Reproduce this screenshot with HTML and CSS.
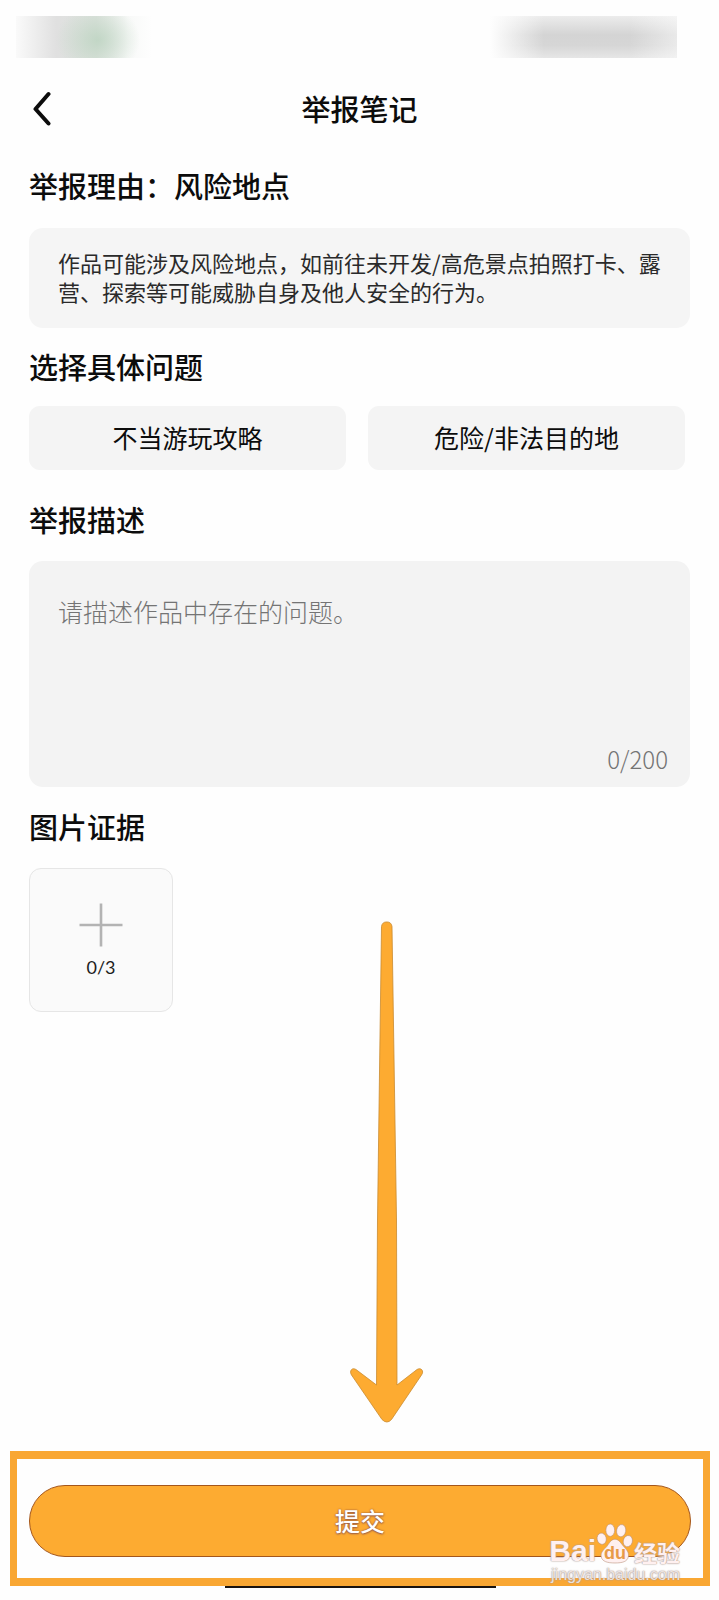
FILE: index.html
```html
<!DOCTYPE html>
<html lang="zh-CN">
<head>
<meta charset="utf-8">
<meta name="viewport" content="width=device-width, initial-scale=1">
<title>举报笔记</title>
<link rel="stylesheet" href="styles.css">
</head>
<body>
<div class="page">
  <div class="status" aria-hidden="true">
    <div class="status-left"></div>
    <div class="status-right"></div>
  </div>
  <header class="header">
    <button class="back" type="button" aria-label="返回">
      <svg width="20" height="36" viewBox="0 0 20 36"><path d="M16.500 4 3.500 19 16.500 33.500" fill="none" stroke="#0c0c0c" stroke-width="4" stroke-linecap="round" stroke-linejoin="round"/></svg>
    </button>
    <h1 class="title">举报笔记</h1>
  </header>
  <main class="content">
    <h2 class="heading">举报理由：风险地点</h2>
    <p class="notice">作品可能涉及风险地点，如前往未开发/高危景点拍照打卡、露营、探索等可能威胁自身及他人安全的行为。</p>
    <h2 class="heading">选择具体问题</h2>
    <div class="options">
      <button class="option" type="button">不当游玩攻略</button>
      <button class="option" type="button">危险/非法目的地</button>
    </div>
    <h2 class="heading"><label for="desc">举报描述</label></h2>
    <div class="desc">
      <textarea class="desc-input" id="desc" maxlength="200" placeholder="请描述作品中存在的问题。"></textarea>
      <span class="desc-count">0/200</span>
    </div>
    <h2 class="heading">图片证据</h2>
    <button class="upload" type="button" aria-label="添加图片 0/3">
      <svg width="44" height="44" viewBox="0 0 44 44"><path d="M22 .5v43M.5 22h43" stroke="#b3b3b3" stroke-width="2.600"/></svg>
      <span class="upload-count">0/3</span>
    </button>
  </main>
  <footer class="footer">
    <div class="frame">
      <button class="submit" type="button">提交</button>
    </div>
    <div class="home-bar"></div>
    <div class="watermark">
      <div class="wm-row">
        <span class="wm-bai">Bai</span>
        <span class="wm-paw">
          <svg width="38" height="43" viewBox="0 0 40 44" fill="#fff0f0" stroke="#b98c74" stroke-width=".6">
            <ellipse cx="6" cy="17" rx="4.800" ry="6" transform="rotate(-12 6 17)"/>
            <ellipse cx="15" cy="8" rx="4.600" ry="6.500"/>
            <ellipse cx="26.500" cy="8.500" rx="4.800" ry="6.500" transform="rotate(10 26.500 8.500)"/>
            <ellipse cx="33.500" cy="19.500" rx="4.800" ry="6" transform="rotate(14 33.500 19.500)"/>
            <path d="M20 17.500c4 0 6 4 9 7.500 3 3.500 6 6 5 11-1 5-6 6.500-14 6.500S6.500 41 5.500 36c-1-5 3-7.500 6-11 2.500-3.500 4.500-7.500 8.500-7.500Z"/>
          </svg>
          <span class="wm-du">du</span>
        </span>
        <span class="wm-cn">经验</span>
      </div>
      <div class="wm-url">jingyan.baidu.com</div>
    </div>
  </footer>
  <svg class="arrow" width="74" height="504" viewBox="0 0 74 504" aria-hidden="true">
    <path d="M31.500 6.500a5.300 5.300 0 0 1 10.500 0L46.500 300 47 465 67 449.500C71 447 74.500 451 71.500 455L41.500 499.500Q37 504.500 32 499.500L1.500 455C-1 451 2 447 6 449.500L26.500 465 27.500 300Z" fill="#fdab31" stroke="#c98a2f" stroke-width=".8" stroke-linejoin="round"/>
  </svg>
</div>
</body>
</html>
```
FILE: styles.css
```css
* {
  box-sizing: border-box;
}

body {
  margin: 0;
  background: #fefefe;
  color: #0c0c0c;
  font-family: "Noto Sans CJK SC", "Noto Sans", sans-serif;
}

button,
textarea {
  margin: 0;
  padding: 0;
  border: 0;
  background: none;
  color: inherit;
  font-family: inherit;
}

.page {
  position: relative;
  display: flex;
  flex-direction: column;
  min-height: 100vh;
}

.status {
  display: flex;
  justify-content: space-between;
  padding: 16px 42px 0 16px;
}

.status-left {
  width: 160px;
  height: 42px;
  background:
    radial-gradient(ellipse 42px 36px at 82px 24px, rgba(184, 210, 189, 0.75), rgba(200, 220, 204, 0) 100%),
    linear-gradient(90deg, #fafafa 0, #e0e0e0 40px, #dfe3df 80px, #f8f9f8 112px, #fefefe 136px);
}

.status-right {
  width: 197px;
  height: 42px;
  background:
    linear-gradient(90deg, #fefefe 0, #fefefe 10px, rgba(254, 254, 254, 0) 64px, rgba(254, 254, 254, 0) 150px, rgba(254, 254, 254, 0.5) 100%),
    linear-gradient(180deg, #ececec 0, #d4d4d4 45%, #d6d6d6 70%, #e6e6e6 100%);
}

.header {
  display: grid;
  grid-template-columns: 44px 1fr 44px;
  align-items: center;
  height: 99px;
  padding: 0 14px;
}

.back {
  display: flex;
  align-items: center;
  justify-content: flex-end;
  padding-right: 6px;
  height: 44px;
}

.title {
  grid-column: 2;
  margin: 0;
  font-size: 29px;
  font-weight: 500;
  line-height: 40px;
  text-align: center;
}

.content {
  display: flex;
  flex-direction: column;
  padding: 8px 29px 0;
}

.heading {
  margin: 0;
  font-size: 29px;
  font-weight: 500;
  line-height: 40px;
}

.notice {
  margin: 23px 0 18px;
  padding: 20px 29px 22px;
  border-radius: 14px;
  background: #f5f5f5;
  color: #2a2a2a;
  font-size: 22px;
  line-height: 29px;
  font-weight: 400;
}

.options {
  display: flex;
  gap: 22px;
  padding-right: 5px;
  margin: 20px 0 29px;
}

.option {
  flex: 1;
  height: 64px;
  padding-bottom: 2px;
  border-radius: 11px;
  background: #f4f4f4;
  font-size: 25px;
  line-height: 36px;
}

.desc {
  display: flex;
  flex-direction: column;
  height: 226px;
  margin: 22px 0 19px;
  padding: 32px 22px 10px 29px;
  border-radius: 14px;
  background: #f3f3f3;
}

.desc-input {
  flex: 1;
  width: 100%;
  resize: none;
  outline: none;
  font-size: 25px;
  line-height: 36px;
  font-weight: 300;
}

.desc-input::placeholder {
  color: #747474;
  opacity: 1;
}

.desc-count {
  align-self: flex-end;
  color: #747474;
  font-size: 24px;
  font-weight: 300;
  line-height: 36px;
}

.upload {
  display: flex;
  flex-direction: column;
  align-items: center;
  justify-content: center;
  gap: 6px;
  width: 144px;
  height: 144px;
  margin-top: 22px;
  padding-top: 3px;
  border: 1px solid #e6e6e6;
  border-radius: 12px;
  background: #fafafa;
}

.upload-count {
  font-family: Lato, sans-serif;
  font-size: 18px;
  line-height: 28px;
  color: #1c1c1c;
}

.footer {
  position: relative;
  margin-top: auto;
  padding: 0 9px 12px 10px;
}

.frame {
  padding: 26px 12px 21px;
  border: 8px solid #f9a733;
  border-width: 8px 7px;
}

.submit {
  display: block;
  width: 100%;
  height: 72px;
  padding-bottom: 3px;
  border: 1px solid #a4561c;
  border-radius: 36px;
  background: #fdab31;
  color: #fff;
  font-size: 25px;
  font-weight: 500;
  line-height: 36px;
  text-shadow: 0 0 2px #8a4a38, 0 1px 2px #a4664c;
}

.home-bar {
  width: 271px;
  height: 2px;
  margin: 0 auto;
  background: #1a1410;
}

.watermark {
  position: absolute;
  right: 39px;
  bottom: 15px;
  color: #fff0f0;
  font-family: "Liberation Sans", "Noto Sans CJK SC", sans-serif;
  font-weight: 700;
  text-shadow: 0 0 1px #a08a80, 0 0 2px #b5a29a;
}

.wm-row {
  display: flex;
  align-items: flex-end;
  justify-content: flex-end;
  height: 48px;
}

.wm-bai {
  font-size: 30px;
  line-height: 28px;
}

.wm-paw {
  position: relative;
  display: block;
  height: 43px;
}

.wm-du {
  position: absolute;
  inset: 22px 0 auto;
  color: #e79a48;
  font-size: 18px;
  line-height: 18px;
  text-align: center;
  text-shadow: none;
}

.wm-cn {
  font-family: "Noto Sans CJK SC", sans-serif;
  font-size: 23px;
  line-height: 26px;
}

.wm-url {
  color: rgba(255, 250, 250, 0.8);
  font-size: 16px;
  font-weight: 400;
  line-height: 20px;
  text-align: right;
}

.arrow {
  position: absolute;
  top: 920px;
  left: calc(50% - 10px);
  pointer-events: none;
}
```
